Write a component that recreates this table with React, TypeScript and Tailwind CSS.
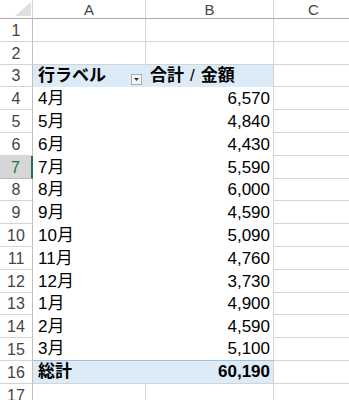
import React from "react";

const GRID = "border-[#d4d4d4]";

const rowHeights = [23, 23, 22, 23, 23, 23, 23, 22, 23, 23, 23, 23, 22, 23, 23, 23, 23];

const months = [
  ["4月", "6,570"],
  ["5月", "4,840"],
  ["6月", "4,430"],
  ["7月", "5,590"],
  ["8月", "6,000"],
  ["9月", "4,590"],
  ["10月", "5,090"],
  ["11月", "4,760"],
  ["12月", "3,730"],
  ["1月", "4,900"],
  ["2月", "4,590"],
  ["3月", "5,100"],
];

const cellFont = { fontFamily: '"Liberation Sans", "Noto Sans CJK JP", sans-serif' };

function RowHeader({ n, active }: { n: number; active?: boolean }) {
  return (
    <div
      className={`w-[33px] shrink-0 flex items-center justify-center border-b border-r ${
        active ? "bg-[#d6d6d6] text-[#217346] border-r-[#217346] border-r-2 border-b-[#bfbfbf]" : "text-[#444] border-b-[#d4d4d4] border-r-[#bfbfbf]"
      } text-[16px] leading-none pt-[1px]`}
      style={{ fontFamily: '"Liberation Sans", sans-serif' }}
    >
      {n}
    </div>
  );
}

export default function App() {
  const rows: React.ReactNode[] = [];
  for (let i = 1; i <= 2; i++) {
    rows.push(
      <div key={i} className="flex" style={{ height: rowHeights[i - 1] }}>
        <RowHeader n={i} />
        <div className={`w-[113px] shrink-0 border-r border-b ${GRID}`} />
        <div className={`w-[128px] shrink-0 border-r border-b ${GRID}`} />
        <div className={`flex-1 border-b ${GRID}`} />
      </div>
    );
  }
  rows.push(
    <div key={3} className="flex" style={{ height: rowHeights[2] }}>
      <RowHeader n={3} />
      <div className="w-[241px] shrink-0 flex bg-[#ddebf7] border-r border-[#d4d4d4] font-bold text-[17px] text-black" style={cellFont}>
        <div className="w-[113px] shrink-0 flex items-end pl-[5px] pb-[1px] relative leading-[20px]">
          行ラベル
          <div className="absolute left-[98px] top-[9px] w-[11px] h-[11px] border border-[#acacac] bg-[#f4f4f4] flex items-center justify-center">
            <svg width="5" height="3" viewBox="0 0 5 3">
              <path d="M0 0 L5 0 L2.5 3 Z" fill="#333" />
            </svg>
          </div>
        </div>
        <div className="flex-1 flex items-end pl-[4px] pb-[1px] leading-[20px] whitespace-pre">
          <span>合計</span>
          <span className="mx-[6px] font-normal">/</span>
          <span>金額</span>
        </div>
      </div>
      <div className={`flex-1 border-b ${GRID}`} />
    </div>
  );
  months.forEach(([m, v], idx) => {
    const n = idx + 4;
    rows.push(
      <div key={n} className="flex" style={{ height: rowHeights[n - 1] }}>
        <RowHeader n={n} active={n === 7} />
        <div
          className={`w-[241px] shrink-0 flex border-r ${GRID} text-[17px] text-black ${n === 15 ? "border-b border-b-[#9bc2e6]" : ""}`}
          style={cellFont}
        >
          <div className="w-[113px] shrink-0 flex items-end pl-[5px] pb-[1px] leading-[20px]">{m}</div>
          <div className="flex-1 flex items-end justify-end pr-[3px] pb-[1px] leading-[20px]">{v}</div>
        </div>
        <div className={`flex-1 border-b ${GRID}`} />
      </div>
    );
  });
  rows.push(
    <div key={16} className="flex" style={{ height: rowHeights[15] }}>
      <RowHeader n={16} />
      <div className={`w-[241px] shrink-0 flex bg-[#ddebf7] border-r border-b ${GRID} font-bold text-[17px] text-black`} style={cellFont}>
        <div className="w-[113px] shrink-0 flex items-end pl-[5px] pb-[1px] leading-[20px]">総計</div>
        <div className="flex-1 flex items-end justify-end pr-[3px] pb-[1px] leading-[20px]">60,190</div>
      </div>
      <div className={`flex-1 border-b ${GRID}`} />
    </div>
  );
  rows.push(
    <div key={17} className="flex" style={{ height: rowHeights[16] }}>
      <RowHeader n={17} />
      <div className={`w-[113px] shrink-0 border-r border-b ${GRID}`} />
      <div className={`w-[128px] shrink-0 border-r border-b ${GRID}`} />
      <div className={`flex-1 border-b ${GRID}`} />
    </div>
  );

  return (
    <div className="w-[349px] h-[400px] overflow-hidden bg-white">
      <div className="flex h-[19px] border-b border-[#ababab] text-[15px] text-[#444] leading-none" style={{ fontFamily: '"Liberation Sans", sans-serif' }}>
        <div className="w-[33px] shrink-0 border-r border-[#d4d4d4] relative">
          <svg className="absolute left-[15px] top-[2px]" width="16" height="14" viewBox="0 0 16 14">
            <path d="M16 0 L16 14 L0 14 Z" fill="#dfdfdf" />
          </svg>
        </div>
        <div className="w-[113px] shrink-0 border-r border-[#d4d4d4] flex items-center justify-center">A</div>
        <div className="w-[128px] shrink-0 border-r border-[#d4d4d4] flex items-center justify-center">B</div>
        <div className="w-[75px] shrink-0 flex items-center justify-center pl-[4px]">C</div>
      </div>
      {rows}
    </div>
  );
}
